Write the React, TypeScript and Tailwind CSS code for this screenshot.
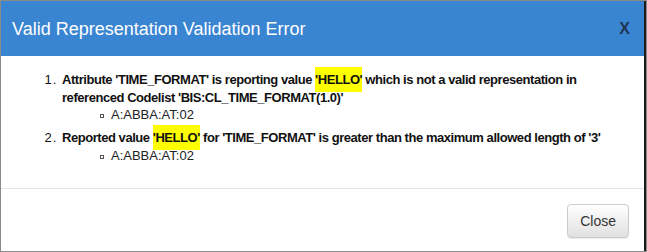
import React from 'react';

const Hl = ({ children }: { children: React.ReactNode }) => (
  <span className="bg-[#ffff00] py-[5px]">{children}</span>
);

const SubItem = ({ text }: { text: string }) => (
  <ul className="pl-[38px] leading-[16px] font-normal tracking-normal text-[#222]">
    <li className="flex items-center">
      <span className="w-[4px] h-[4px] border border-[#555] mr-[7px] mt-[1px]" />
      <span>{text}</span>
    </li>
  </ul>
);

export default function App() {
  return (
    <div
      className="w-[647px] h-[252px] border border-[#8a8a8a] bg-white text-[#333]"
      style={{ fontFamily: '"Liberation Sans", Arial, sans-serif' }}
    >
      <div className="h-full border-r-2 border-[#1c1c1c] flex flex-col">
        {/* header */}
        <div className="h-[55px] bg-[#3a85d1] flex items-center justify-between pl-[11px] pr-[14px] shrink-0">
          <h4 className="text-[18px] text-white leading-none mt-[1px]">
            Valid Representation Validation Error
          </h4>
          <button className="text-[16px] font-bold text-[#1e3552] leading-none">X</button>
        </div>

        {/* body */}
        <div className="h-[132px] pt-[15px] px-[15px] text-[13px] shrink-0">
          <ol className="list-decimal pl-[46px] font-bold text-[#111] tracking-[-0.45px] marker:font-normal marker:tracking-[1px]">
            <li className="leading-[18px]">
              Attribute 'TIME_FORMAT' is reporting value <Hl>'HELLO'</Hl> which is not a
              valid representation in referenced Codelist 'BIS:CL_TIME_FORMAT(1.0)'
              <SubItem text="A:ABBA:AT:02" />
            </li>
            <li className="leading-[18px] mt-[6px]">
              Reported value <Hl>'HELLO'</Hl> for 'TIME_FORMAT' is greater than the maximum
              allowed length of '3'
              <div className="mt-[1px]">
                <SubItem text="A:ABBA:AT:02" />
              </div>
            </li>
          </ol>
        </div>

        {/* footer */}
        <div className="flex-1 border-t border-[#e5e5e5] flex justify-end items-start pt-[15px] pr-[15px]">
          <button className="h-[34px] px-[12px] rounded-[4px] border border-[#cccccc] bg-gradient-to-b from-white to-[#e0e0e0] text-[14px] text-[#333] shadow-[inset_0_1px_0_rgba(255,255,255,0.15),0_1px_1px_rgba(0,0,0,0.075)]">
            Close
          </button>
        </div>
      </div>
    </div>
  );
}
